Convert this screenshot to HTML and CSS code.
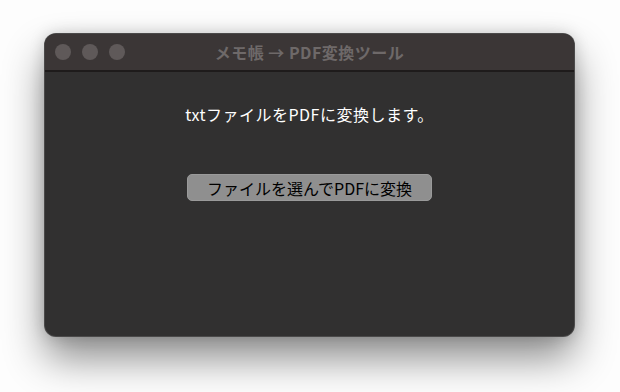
FILE: index.html
```html
<!DOCTYPE html>
<html lang="ja">
<head>
  <meta charset="UTF-8" />
  <meta name="viewport" content="width=device-width, initial-scale=1.0" />
  <title>メモ帳 → PDF変換ツール</title>
  <link rel="stylesheet" href="styles.css">
</head>
<body>
  <div class="window">
    <div class="titlebar">
      <div class="lights">
        <span class="light"></span>
        <span class="light"></span>
        <span class="light"></span>
      </div>
      <div class="title">メモ帳 → PDF変換ツール</div>
    </div>
    <div class="content">
      <p class="message">txtファイルをPDFに変換します。</p>
      <button class="convert">ファイルを選んでPDFに変換</button>
    </div>
  </div>
</body>
</html>
```

FILE: styles.css
```css
:root {
  --window: #313030;
  --titlebar: #3b3636;
  --light: #5f5959;
  --title: #6e6969;
  --button: #8f8f8f;
}

html {
  background: #fdfdfd;
}

body {
  margin: 0;
  font-family: "Noto Sans CJK JP", "Noto Sans", sans-serif;
  padding: 34px 0 0 45px;
  height: 392px;
  box-sizing: border-box;
}

.window {
  width: 529px;
  height: 302px;
  background: var(--window);
  border-radius: 11px;
  box-shadow: 0 0 0 1px #4b4a4a, 0 0 16px rgba(0, 0, 0, 0.18), 0 22px 40px rgba(0, 0, 0, 0.45);
  overflow: hidden;
  display: flex;
  flex-direction: column;
}

.titlebar {
  height: 36px;
  background: var(--titlebar);
  border-bottom: 2px solid #1e1b1b;
  display: flex;
  align-items: center;
  position: relative;
}

.lights {
  display: flex;
  gap: 11px;
  padding-left: 10px;
}

.light {
  width: 16px;
  height: 16px;
  border-radius: 50%;
  background: var(--light);
}

.title {
  position: absolute;
  left: 0;
  right: 0;
  text-align: center;
  color: var(--title);
  font-weight: bold;
  font-size: 16px;
  letter-spacing: 0.5px;
}

.content {
  display: flex;
  flex-direction: column;
  align-items: center;
}

.message {
  margin: 30px 0 0;
  color: #fff;
  font-size: 16px;
  line-height: 24px;
  letter-spacing: 0.5px;
}

.convert {
  margin-top: 48px;
  width: 245px;
  height: 27px;
  background: var(--button);
  border: 1px solid #9a9a9a;
  border-radius: 5px;
  color: #000;
  font-family: inherit;
  font-size: 16px;
  padding: 0;
}
```
